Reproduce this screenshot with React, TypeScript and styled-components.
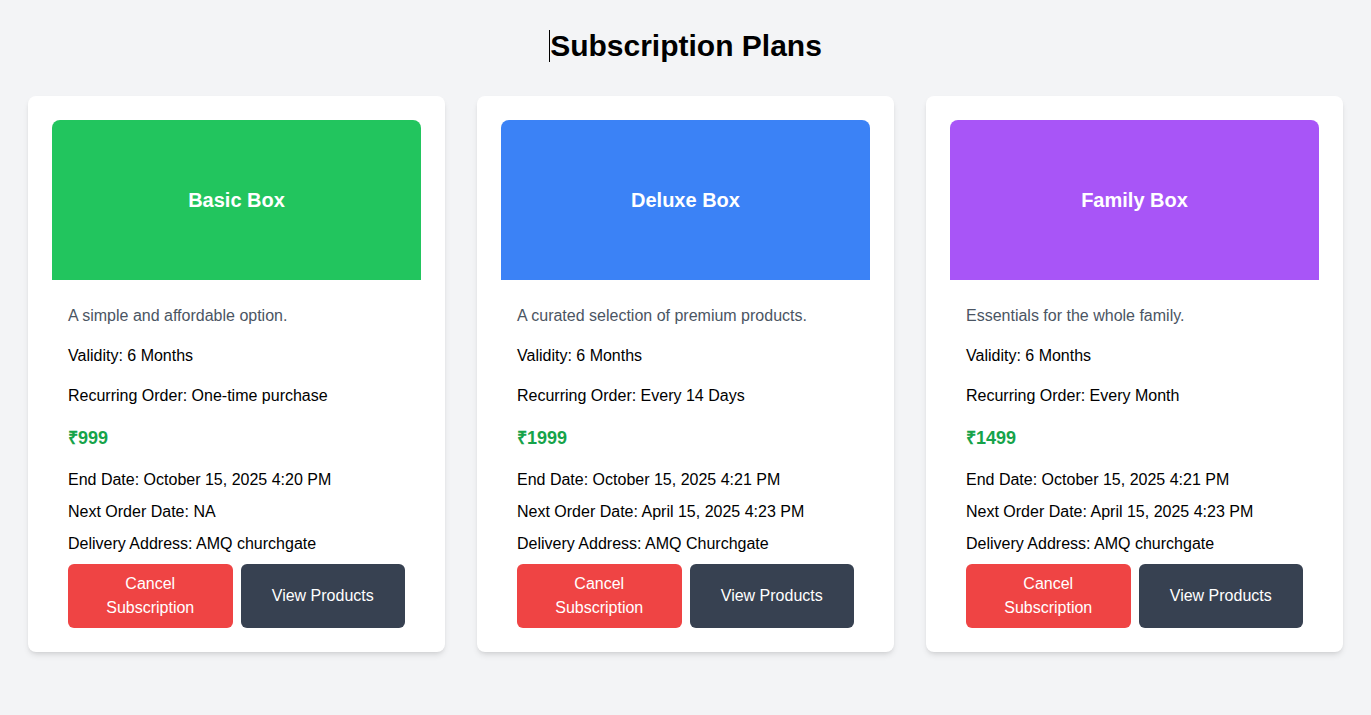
import styled, { createGlobalStyle } from 'styled-components';

const GlobalStyle = createGlobalStyle`
  * { box-sizing: border-box; }
  body {
    margin: 0;
    background: #f3f4f6;
    font-family: 'Liberation Sans', Arial, sans-serif;
    color: #000;
  }
`;

type Plan = {
  name: string;
  color: string;
  description: string;
  validity: string;
  recurring: string;
  price: string;
  endDate: string;
  nextOrder: string;
  address: string;
};

const plans: Plan[] = [
  {
    name: 'Basic Box',
    color: '#22c55e',
    description: 'A simple and affordable option.',
    validity: '6 Months',
    recurring: 'One-time purchase',
    price: '₹999',
    endDate: 'October 15, 2025 4:20 PM',
    nextOrder: 'NA',
    address: 'AMQ churchgate',
  },
  {
    name: 'Deluxe Box',
    color: '#3b82f6',
    description: 'A curated selection of premium products.',
    validity: '6 Months',
    recurring: 'Every 14 Days',
    price: '₹1999',
    endDate: 'October 15, 2025 4:21 PM',
    nextOrder: 'April 15, 2025 4:23 PM',
    address: 'AMQ Churchgate',
  },
  {
    name: 'Family Box',
    color: '#a855f7',
    description: 'Essentials for the whole family.',
    validity: '6 Months',
    recurring: 'Every Month',
    price: '₹1499',
    endDate: 'October 15, 2025 4:21 PM',
    nextOrder: 'April 15, 2025 4:23 PM',
    address: 'AMQ churchgate',
  },
];

const App: React.FC = () => {
  return (
    <>
      <GlobalStyle />
      <Page>
        <Title>
          <Caret />
          Subscription Plans
        </Title>
        <Grid>
          {plans.map((plan) => (
            <Card key={plan.name}>
              <Banner $color={plan.color}>
                <BannerTitle>{plan.name}</BannerTitle>
              </Banner>
              <Body>
                <Description>{plan.description}</Description>
                <Line>Validity: {plan.validity}</Line>
                <Line>Recurring Order: {plan.recurring}</Line>
                <Price>{plan.price}</Price>
                <Detail>End Date: {plan.endDate}</Detail>
                <Detail>Next Order Date: {plan.nextOrder}</Detail>
                <Detail>Delivery Address: {plan.address}</Detail>
                <Actions>
                  <Button $variant="danger">Cancel Subscription</Button>
                  <Button $variant="dark">View Products</Button>
                </Actions>
              </Body>
            </Card>
          ))}
        </Grid>
      </Page>
    </>
  );
};

export default App;

const Page = styled.main`
  min-height: 715px;
  padding: 28px 28px 40px;
`;

const Title = styled.h1`
  margin: 0 0 32px;
  text-align: center;
  font-size: 30px;
  line-height: 36px;
  font-weight: 700;
  color: #000;
`;

// text cursor visible in the reference, just before the heading
const Caret = styled.span`
  display: inline-block;
  width: 1px;
  height: 32px;
  background: #000;
  vertical-align: -6px;
`;

const Grid = styled.div`
  display: grid;
  grid-template-columns: repeat(3, 1fr);
  gap: 32px;
`;

const Card = styled.div`
  background: #fff;
  border-radius: 8px;
  padding: 24px;
  box-shadow: 0 4px 6px -1px rgba(0, 0, 0, 0.1), 0 2px 4px -2px rgba(0, 0, 0, 0.1);
`;

const Banner = styled.div<{ $color: string }>`
  height: 160px;
  background: ${(p) => p.$color};
  border-radius: 8px 8px 0 0;
  display: flex;
  align-items: center;
  justify-content: center;
`;

const BannerTitle = styled.h2`
  margin: 0;
  color: #fff;
  font-size: 20px;
  line-height: 28px;
  font-weight: 700;
`;

const Body = styled.div`
  padding: 24px 16px 0;
`;

const Description = styled.p`
  margin: 0 0 16px;
  font-size: 16px;
  line-height: 24px;
  color: #4b5563;
`;

const Line = styled.p`
  margin: 0 0 16px;
  font-size: 16px;
  line-height: 24px;
`;

const Price = styled.p`
  margin: 0 0 16px;
  font-size: 18px;
  line-height: 28px;
  font-weight: 700;
  color: #16a34a;
`;

const Detail = styled.p`
  margin: 0 0 8px;
  font-size: 16px;
  line-height: 24px;
`;

const Actions = styled.div`
  display: flex;
  gap: 8px;
  margin-top: 8px;
`;

const Button = styled.button<{ $variant: 'danger' | 'dark' }>`
  flex: 1;
  border: none;
  border-radius: 6px;
  padding: 8px 16px;
  min-height: 64px;
  font-family: inherit;
  font-size: 16px;
  line-height: 24px;
  color: #fff;
  cursor: pointer;
  background: ${(p) => (p.$variant === 'danger' ? '#ef4444' : '#374151')};
`;
